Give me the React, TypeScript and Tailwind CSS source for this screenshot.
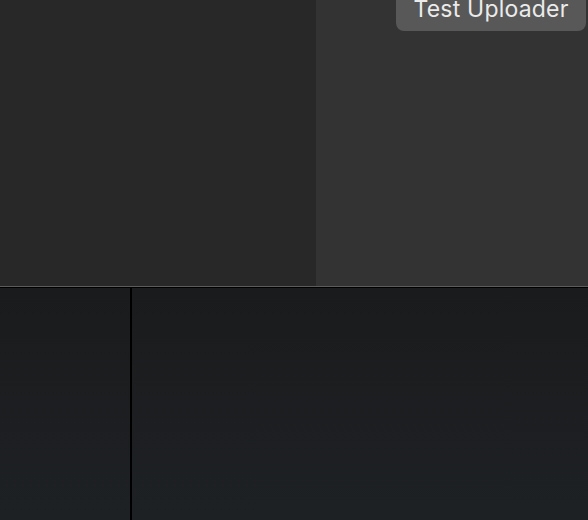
export default function App() {
  return (
    <div className="flex h-[520px] w-[588px] flex-col overflow-hidden bg-[#1c1e20]" style={{ fontFamily: "Inter, 'Noto Sans', sans-serif" }}>
      {/* Top area */}
      <div className="relative flex h-[286px] shrink-0">
        <div className="w-[316px] bg-[#282828]" />
        <div className="flex-1 bg-[#333333]" />
        <button className="absolute right-[2px] top-[-12px] flex h-[43px] w-[190px] items-end justify-center rounded-[8px] bg-[#585858] pb-[10px] text-[23px] leading-none tracking-[0.2px] text-[#ebebeb]">
          Test Uploader
        </button>
      </div>
      <div className="h-px shrink-0 bg-[#5c5c5c]" />
      <div className="h-px shrink-0 bg-black" />
      {/* Bottom area */}
      <div className="flex flex-1 bg-gradient-to-b from-[#1a1b1d] to-[#1e2124]">
        <div className="w-[130px]" />
        <div className="w-[2px] bg-black" />
        <div className="flex-1" />
      </div>
    </div>
  );
}
